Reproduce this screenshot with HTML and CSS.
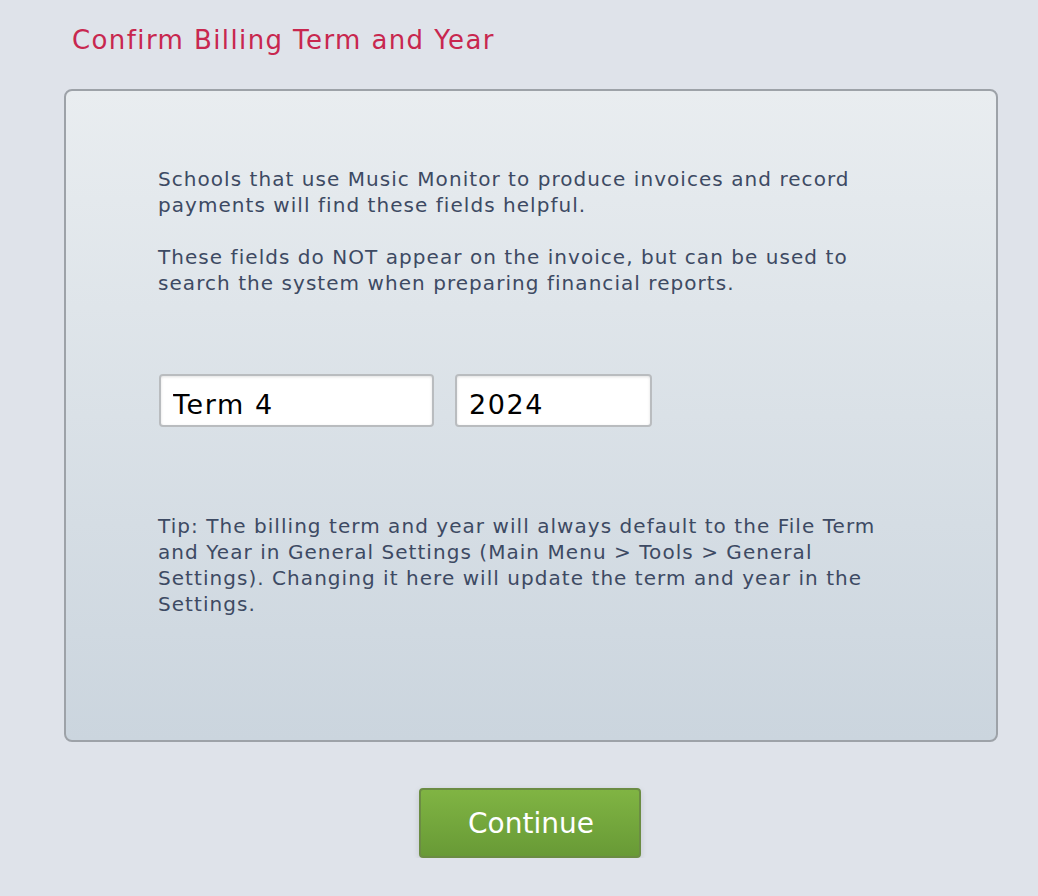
FILE: index.html
```html
<!DOCTYPE html>
<html>
<head>
<meta charset="utf-8">
<link rel="stylesheet" href="styles.css">
</head>
<body>
<div class="page">
  <h1 class="title">Confirm Billing Term and Year</h1>
  <div class="panel">
    <p class="text">Schools that use Music Monitor to produce invoices and record payments will find these fields helpful.</p>
    <p class="text">These fields do NOT appear on the invoice, but can be used to search the system when preparing financial reports.</p>
    <div class="fields">
      <input class="field field-term" type="text" value="Term 4">
      <input class="field field-year" type="text" value="2024">
    </div>
    <p class="text tip">Tip: The billing term and year will always default to the File Term and Year in General Settings (Main Menu &gt; Tools &gt; General Settings). Changing it here will update the term and year in the Settings.</p>
  </div>
  <div class="actions">
    <button class="btn">Continue</button>
  </div>
</div>
</body>
</html>
```
FILE: styles.css
```css
html, body {
  margin: 0;
  padding: 0;
  background: #dfe3ea;
  font-family: "DejaVu Sans", Verdana, sans-serif;
}
.page {
  width: 934px;
  margin-left: 64px;
  padding-top: 23px;
}
.title {
  margin: 0 0 0 8px;
  font-size: 26px;
  letter-spacing: 1.4px;
  font-weight: normal;
  color: #c8274f;
  line-height: 34px;
}
.panel {
  margin-top: 32px;
  height: 653px;
  box-sizing: border-box;
  border: 2px solid #9da2a8;
  border-radius: 8px;
  background: linear-gradient(to bottom, #e9edf0, #cbd5de);
  padding: 75px 0 0 92px;
}
.text {
  width: 740px;
  margin: 0 0 26px 0;
  font-size: 20px;
  letter-spacing: 1.05px;
  line-height: 26px;
  color: #3d4a63;
}
.fields {
  display: flex;
  gap: 21px;
  margin-top: 78px;
  margin-left: 1px;
}
.field {
  height: 53px;
  box-sizing: border-box;
  border: 2px solid #b9bcbf;
  border-radius: 4px;
  background: #fff;
  box-shadow: inset 0 1px 3px rgba(0,0,0,0.12);
  font-family: "DejaVu Sans", Verdana, sans-serif;
  font-size: 27px;
  letter-spacing: 1.6px;
  color: #000;
  padding: 7px 12px 0;
  margin: 0;
}
.field-term { width: 275px; }
.field-year { width: 197px; }
.tip {
  margin-top: 86px;
}
.actions {
  display: flex;
  justify-content: center;
  margin-top: 46px;
  padding-right: 2px;
}
.btn {
  width: 222px;
  height: 70px;
  border: 2px solid #6b8c43;
  border-radius: 4px;
  background: linear-gradient(to bottom, #80b443, #689a36);
  color: #fff;
  font-family: "DejaVu Sans", Verdana, sans-serif;
  font-size: 28px;
  box-shadow: 0 2px 6px rgba(0,0,0,0.12);
  padding: 0 0 0 2px;
}
```
